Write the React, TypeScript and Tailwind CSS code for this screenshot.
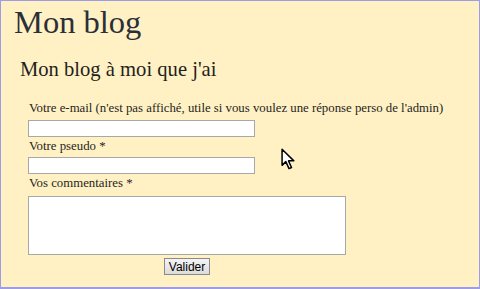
import React from "react";

export default function App() {
  return (
    <div
      className="relative w-[480px] h-[289px] overflow-hidden border border-b-2 border-[#9c9ce8] bg-[#fff1c3] text-[#222]"
      style={{ fontFamily: '"Liberation Serif", serif' }}
    >
      <h1 className="pl-[13px] pt-[2px] text-[32.5px] leading-[38px] text-[#2b2f38]">Mon blog</h1>
      <h2 className="pl-[19px] mt-[16px] text-[20.6px] leading-[24px] text-[#1f1f1f]">Mon blog à moi que j'ai</h2>
      <form className="pl-[27px] mt-[20px] flex flex-col text-[12.8px] leading-[15px] text-[#1f1f1f]">
        <label className="block pl-[1px]">Votre e-mail (n'est pas affiché, utile si vous voulez une réponse perso de l'admin)</label>
        <input type="text" className="mt-[4px] w-[227px] h-[17px] bg-white border border-[#a8a8a8]" />
        <label className="block pl-[1px] mt-[2px]">Votre pseudo *</label>
        <input type="text" className="mt-[3px] w-[227px] h-[17px] bg-white border border-[#a8a8a8]" />
        <label className="block pl-[1px] mt-[2px]">Vos commentaires *</label>
        <textarea className="mt-[5px] w-[318px] h-[59px] bg-white border border-[#a8a8a8] resize-none" />
        <div className="w-[318px] flex justify-center mt-[3px]">
          <button
            type="button"
            className="w-[46px] h-[17px] px-0 text-[12px] leading-[14px] text-black border border-[#8a8a8a] bg-gradient-to-b from-[#f4f4f4] to-[#dcdcdc]"
            style={{ fontFamily: '"Liberation Sans", Arial, sans-serif' }}
          >
            Valider
          </button>
        </div>
      </form>
      <svg className="absolute left-[280px] top-[147px]" width="15" height="24" viewBox="0 0 14 22">
        <path d="M1 1 L1 16 L4.5 12.5 L7.5 19 L9.8 18 L7 11.8 L12 11.8 Z" fill="#fff" stroke="#000" strokeWidth="1.4" strokeLinejoin="round" />
      </svg>
    </div>
  );
}
